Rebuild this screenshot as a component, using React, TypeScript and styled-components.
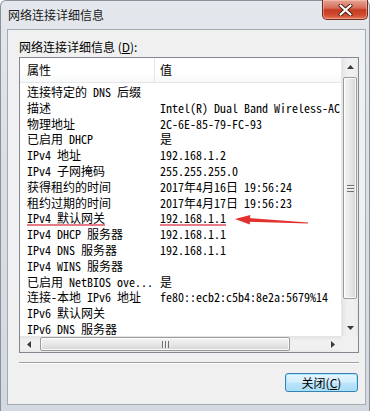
import React from 'react'
import styled, { createGlobalStyle } from 'styled-components'

type Row = { name: string; value: string; marked?: boolean }

const rows: Row[] = [
	{ name: '连接特定的 DNS 后缀', value: '' },
	{ name: '描述', value: 'Intel(R) Dual Band Wireless-AC' },
	{ name: '物理地址', value: '2C-6E-85-79-FC-93' },
	{ name: '已启用 DHCP', value: '是' },
	{ name: 'IPv4 地址', value: '192.168.1.2' },
	{ name: 'IPv4 子网掩码', value: '255.255.255.0' },
	{ name: '获得租约的时间', value: '2017年4月16日 19:56:24' },
	{ name: '租约过期的时间', value: '2017年4月17日 19:56:23' },
	{ name: 'IPv4 默认网关', value: '192.168.1.1', marked: true },
	{ name: 'IPv4 DHCP 服务器', value: '192.168.1.1' },
	{ name: 'IPv4 DNS 服务器', value: '192.168.1.1' },
	{ name: 'IPv4 WINS 服务器', value: '' },
	{ name: '已启用 NetBIOS ove...', value: '是' },
	{ name: '连接-本地 IPv6 地址', value: 'fe80::ecb2:c5b4:8e2a:5679%14' },
	{ name: 'IPv6 默认网关', value: '' },
	{ name: 'IPv6 DNS 服务器', value: '' },
]

function Arrow({ dir }: { dir: 'up' | 'down' | 'left' | 'right' }) {
	const pts = {
		up: '0,4 3.5,0 7,4',
		down: '0,0 3.5,4 7,0',
		left: '4,0 0,3.5 4,7',
		right: '0,0 4,3.5 0,7',
	}[dir]
	const vertical = dir === 'up' || dir === 'down'
	return (
		<svg width={vertical ? 7 : 4} height={vertical ? 4 : 7}>
			<polygon points={pts} fill="#3a3a3a" />
		</svg>
	)
}

function App() {
	return (
		<>
			<GlobalStyle />
			<Window>
				<TitleBar>
					<Title>网络连接详细信息</Title>
					<CloseButton>
						<svg width="15" height="12" viewBox="0 0 15 12">
							<path d="M2.5 1.5 L12.5 10.5 M12.5 1.5 L2.5 10.5" stroke="#4a1c14" strokeWidth="4" strokeLinecap="round" />
							<path d="M2.5 1.5 L12.5 10.5 M12.5 1.5 L2.5 10.5" stroke="#ffffff" strokeWidth="2.2" strokeLinecap="round" />
						</svg>
					</CloseButton>
				</TitleBar>
				<Client>
					<Label>
						网络连接详细信息 (<u>D</u>):
					</Label>
					<ListBox>
						<Viewport>
							<Header>
								<HeaderCell>属性</HeaderCell>
								<HeaderCell last>值</HeaderCell>
							</Header>
							<Rows>
								{rows.map((r) => (
									<React.Fragment key={r.name}>
										<NameCell>
											<Mark marked={r.marked}>{r.name}</Mark>
										</NameCell>
										<ValueCell>
											<Mark marked={r.marked}>{r.value}</Mark>
										</ValueCell>
									</React.Fragment>
								))}
							</Rows>
							<Annotation viewBox="0 0 338 278" width="338" height="278">
								<polygon points="215,161 230.3,157 229.7,166.6" fill="#e2302d" />
								<polygon points="228,160.1 288,164.4 288,165.4 228,163.7" fill="#e2302d" />
							</Annotation>
						</Viewport>
						<VScroll>
							<ScrollButton>
								<Arrow dir="up" />
							</ScrollButton>
							<VTrack>
								<VThumb>
									<Grip vertical />
								</VThumb>
							</VTrack>
							<ScrollButton>
								<Arrow dir="down" />
							</ScrollButton>
						</VScroll>
						<HScroll>
							<ScrollButton>
								<Arrow dir="left" />
							</ScrollButton>
							<HTrack>
								<HThumb>
									<Grip />
								</HThumb>
							</HTrack>
							<ScrollButton>
								<Arrow dir="right" />
							</ScrollButton>
						</HScroll>
						<Corner />
					</ListBox>
					<Separator />
					<ButtonRow>
						<DialogButton>
							关闭(<u>C</u>)
						</DialogButton>
					</ButtonRow>
				</Client>
			</Window>
		</>
	)
}

const GlobalStyle = createGlobalStyle`
	html, body {
		margin: 0;
		padding: 0;
		background: #ffffff;
	}
	body {
		width: 370px;
		height: 411px;
		overflow: hidden;
		font-family: "Noto Sans Mono CJK SC", "Noto Sans CJK SC", monospace;
		font-size: 12px;
		color: #000;
	}
	* {
		box-sizing: border-box;
	}
`

const Window = styled.div`
	display: flex;
	flex-direction: column;
	width: 370px;
	height: 411px;
	border: 1px solid #8b9199;
	border-bottom: none;
	border-radius: 6px 6px 0 0;
	background: linear-gradient(180deg, #e4e8ed 0%, #dadfe5 40%, #d3d9e0 100%);
`

const TitleBar = styled.div`
	display: flex;
	justify-content: space-between;
	align-items: flex-start;
	height: 28px;
	flex-shrink: 0;
`

const Title = styled.div`
	padding: 7px 0 0 7px;
	line-height: 14px;
	font-family: "Noto Sans CJK SC", sans-serif;
	font-size: 12px;
	color: #1a1a1a;
`

const CloseButton = styled.div`
	display: flex;
	align-items: center;
	justify-content: center;
	width: 46px;
	height: 20px;
	margin-top: -1px;
	margin-right: 1px;
	border: 1px solid #6e2b1f;
	border-top: none;
	border-radius: 0 0 5px 5px;
	background: linear-gradient(
		180deg,
		#e7a596 0%,
		#d66d58 42%,
		#c53b22 52%,
		#cf4a2e 78%,
		#e4785a 100%
	);
	box-shadow: inset 0 0 0 1px rgba(255, 210, 200, 0.45);
`

const Client = styled.div`
	display: flex;
	flex-direction: column;
	flex: 1;
	margin: 0 3px 6px 6px;
	padding: 9px 0 0 11px;
	background: #f0f0f0;
	border: 1px solid #a3abb4;
`

const Label = styled.div`
	line-height: 16px;
	height: 16px;
	font-family: "Noto Sans CJK SC", sans-serif;
	font-size: 12px;

	u {
		text-underline-offset: 1px;
	}
`

const ListBox = styled.div`
	display: grid;
	grid-template-columns: 1fr 17px;
	grid-template-rows: 1fr 16px;
	width: 340px;
	height: 296px;
	margin-top: 2px;
	background: #ffffff;
	border: 1px solid #828790;
`

const Viewport = styled.div`
	position: relative;
	overflow: hidden;
	white-space: nowrap;
`

const Header = styled.div`
	display: grid;
	grid-template-columns: 135px 1fr;
	height: 25px;
	background: linear-gradient(180deg, #ffffff 0%, #ffffff 60%, #f7f8f9 100%);
	border-bottom: 1px solid #e3e6ea;
`

const HeaderCell = styled.div<{ last?: boolean }>`
	padding-left: ${(p) => (p.last ? '5px' : '7px')};
	line-height: 24px;
	font-family: "Noto Sans CJK SC", sans-serif;
	border-right: ${(p) => (p.last ? 'none' : '1px solid #e3e8ee')};
`

const Rows = styled.div`
	display: grid;
	grid-template-columns: 135px 1fr;
	grid-auto-rows: 15.8px;
	padding-top: 1px;
`

const NameCell = styled.div`
	padding-left: 7px;
	line-height: 15.8px;
	overflow: hidden;
`

const ValueCell = styled.div`
	padding-left: 5px;
	line-height: 15.8px;
`

const Mark = styled.span<{ marked?: boolean }>`
	display: inline-block;
	height: 15.8px;
	background-image: ${(p) =>
		p.marked ? 'linear-gradient(#e57b86, #e57b86)' : 'none'};
	background-size: 100% 2px;
	background-position: left bottom;
	background-repeat: no-repeat;
`

const Annotation = styled.svg`
	position: absolute;
	left: 0;
	top: 0;
	pointer-events: none;
`

const VScroll = styled.div`
	display: flex;
	flex-direction: column;
	background: linear-gradient(90deg, #e3e3e3 0%, #f0f0f0 30%, #f0f0f0 80%, #e8e8e8 100%);
	border-left: 1px solid #e8e8e8;
`

const HScroll = styled.div`
	display: flex;
	background: linear-gradient(180deg, #e3e3e3 0%, #f0f0f0 30%, #f0f0f0 80%, #e8e8e8 100%);
`

const ScrollButton = styled.div`
	display: flex;
	align-items: center;
	justify-content: center;
	width: 17px;
	height: 17px;
	flex-shrink: 0;
`

const VTrack = styled.div`
	flex: 1;
	display: flex;
	flex-direction: column;
	padding: 2px 0 0 0;
`

const VThumb = styled.div`
	display: flex;
	align-items: center;
	justify-content: center;
	height: 222px;
	margin: 0 1px;
	border: 1px solid #9b9b9b;
	border-radius: 2px;
	background: linear-gradient(90deg, #f4f4f4 0%, #e8e8e8 50%, #d6d6d6 100%);
	box-shadow: inset 0 0 0 1px rgba(255, 255, 255, 0.8);
`

const HTrack = styled.div`
	flex: 1;
	display: flex;
	padding: 0 0 0 3px;
`

const HThumb = styled.div`
	display: flex;
	align-items: center;
	justify-content: center;
	width: 250px;
	margin: 1px 0;
	border: 1px solid #9b9b9b;
	border-radius: 2px;
	background: linear-gradient(180deg, #f4f4f4 0%, #e8e8e8 50%, #d6d6d6 100%);
	box-shadow: inset 0 0 0 1px rgba(255, 255, 255, 0.8);
`

const Grip = styled.div<{ vertical?: boolean }>`
	width: 7px;
	height: 7px;
	background: ${(p) =>
		p.vertical
			? 'repeating-linear-gradient(180deg, #6f6f6f 0 1px, #f4f4f4 1px 2px, transparent 2px 3px)'
			: 'repeating-linear-gradient(90deg, #6f6f6f 0 1px, #f4f4f4 1px 2px, transparent 2px 3px)'};
`

const Corner = styled.div`
	background: #f0f0f0;
`

const Separator = styled.div`
	width: 340px;
	margin-top: 9px;
	border-top: 1px solid #a0a0a0;
	border-bottom: 1px solid #ffffff;
`

const ButtonRow = styled.div`
	display: flex;
	justify-content: flex-end;
	width: 340px;
	padding-right: 1px;
	margin-top: 9px;
`

const DialogButton = styled.div`
	display: flex;
	align-items: center;
	justify-content: center;
	width: 73px;
	height: 19px;
	border: 1px solid #3c7fb1;
	border-radius: 3px;
	background: linear-gradient(180deg, #e5f5fd 0%, #d3eefc 48%, #bde5fb 52%, #a9dbf6 100%);
	box-shadow: inset 0 0 0 1px rgba(160, 230, 255, 0.9);
	font-family: "Noto Sans CJK SC", sans-serif;
	font-size: 12px;
	line-height: 17px;
`

export default App
